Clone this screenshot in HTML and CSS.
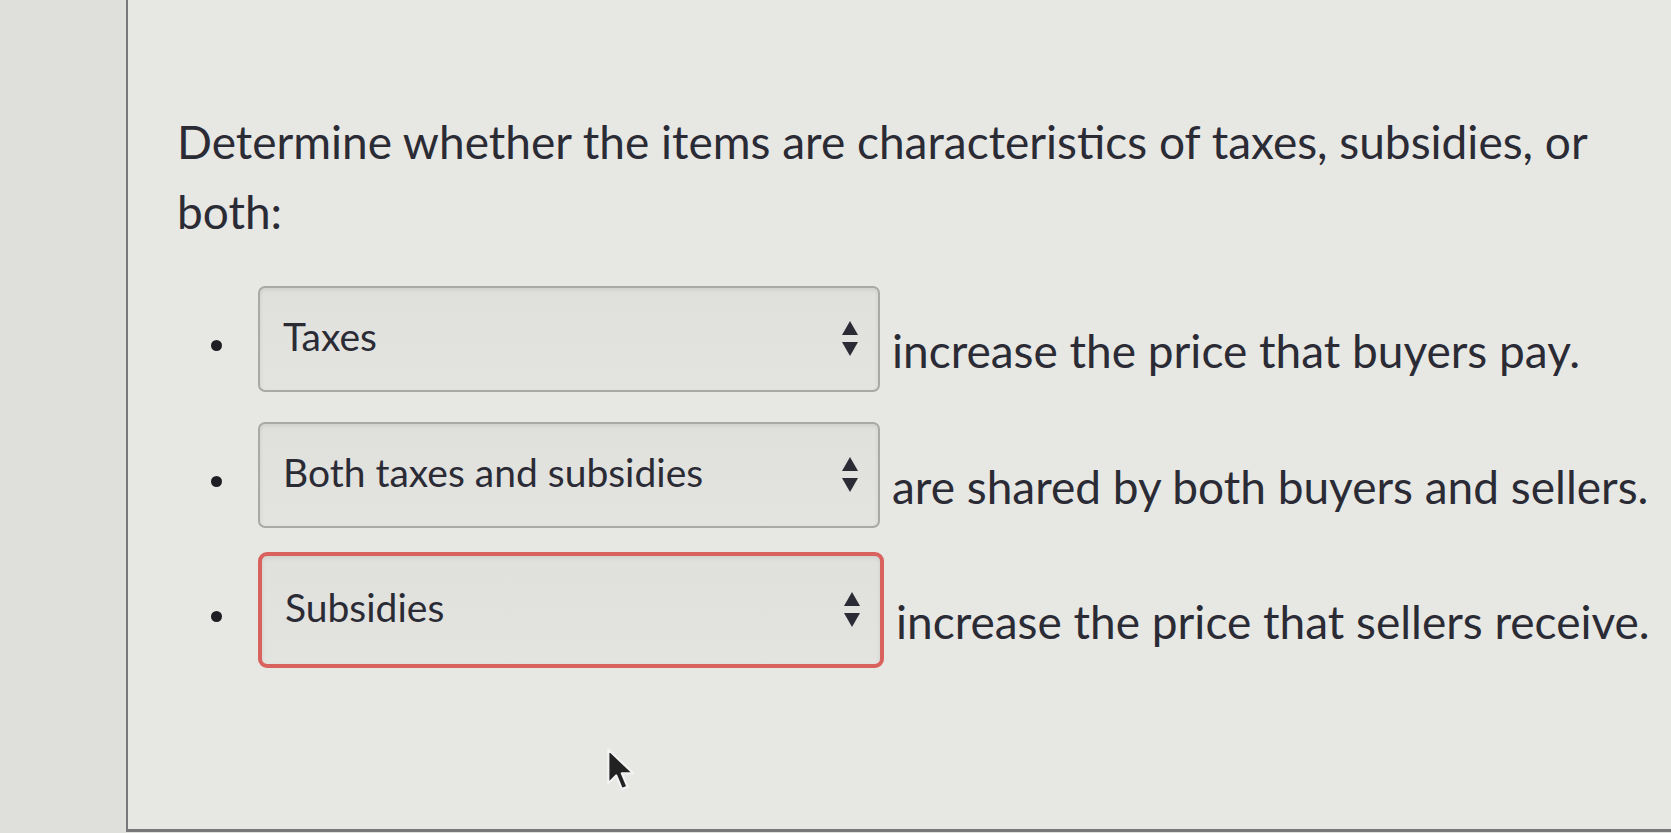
FILE: index.html
```html
<!DOCTYPE html>
<html>
    <head>
        <meta charset="utf-8">
        <title>Taxes and Subsidies</title>
        <link rel="stylesheet" href="styles.css">
    </head>
    <body>
        <div class="panel">
            <p class="question">Determine whether the items are characteristics of taxes, subsidies, or both:</p>
            <ul class="items">
                <li class="item">
                    <div class="dropdown">
                        <span class="choice">Taxes</span>
                        <svg class="arrows" width="18" height="36" viewBox="0 0 18 36">
                            <path d="M9 0 L17 14 L1 14 Z" fill="#2b2b35"/>
                            <path d="M1 21 L17 21 L9 35 Z" fill="#2b2b35"/>
                        </svg>
                    </div>
                    <span class="rest">increase the price that buyers pay.</span>
                </li>
                <li class="item">
                    <div class="dropdown">
                        <span class="choice">Both taxes and subsidies</span>
                        <svg class="arrows" width="18" height="36" viewBox="0 0 18 36">
                            <path d="M9 0 L17 14 L1 14 Z" fill="#2b2b35"/>
                            <path d="M1 21 L17 21 L9 35 Z" fill="#2b2b35"/>
                        </svg>
                    </div>
                    <span class="rest">are shared by both buyers and sellers.</span>
                </li>
                <li class="item">
                    <div class="dropdown wrong">
                        <span class="choice">Subsidies</span>
                        <svg class="arrows" width="18" height="36" viewBox="0 0 18 36">
                            <path d="M9 0 L17 14 L1 14 Z" fill="#2b2b35"/>
                            <path d="M1 21 L17 21 L9 35 Z" fill="#2b2b35"/>
                        </svg>
                    </div>
                    <span class="rest">increase the price that sellers receive.</span>
                </li>
            </ul>
            <svg class="cursor" width="34" height="48" viewBox="0 0 30 42">
                <path d="M2 2 L2 32 L9 25 L14 37 L19 35 L14 23 L24 23 Z" fill="#222" stroke="#f2f2f2" stroke-width="2" stroke-linejoin="round"/>
            </svg>
        </div>
    </body>
</html>
```

FILE: styles.css
```css
html, body {
    margin: 0;
    padding: 0;
}
body {
    background: #dfdfdb;
    font-family: Lato, "Open Sans", sans-serif;
    color: #2b2b35;
    height: 833px;
    overflow: hidden;
}
.panel {
    position: relative;
    margin-left: 126px;
    height: 829px;
    background: #e7e7e3;
    border-left: 2px solid #77777a;
    border-bottom: 3px solid #77777a;
    padding-left: 49px;
    padding-right: 40px;
}
.question {
    margin: 0;
    padding-top: 107px;
    width: 1460px;
    font-size: 46px;
    line-height: 70px;
}
.items {
    list-style: none;
    margin: 39px 0 0 0;
    padding: 0;
}
.item {
    display: flex;
    align-items: center;
    margin-bottom: 30px;
    white-space: nowrap;
}
.item:nth-child(2) {
    margin-bottom: 24px;
}
.item::before {
    content: "";
    flex: none;
    width: 11px;
    height: 11px;
    border-radius: 50%;
    background: #1e1e24;
    margin: 12px 36px 0 34px;
}
.dropdown {
    flex: none;
    width: 622px;
    height: 106px;
    box-sizing: border-box;
    display: flex;
    align-items: center;
    justify-content: space-between;
    padding: 0 19px 6px 23px;
    border: 2px solid #a9a9a6;
    border-radius: 7px;
    background: linear-gradient(#e0e0dd, #e3e3e0);
    box-shadow: inset 0 2px 4px rgba(0, 0, 0, 0.08);
}
.dropdown.wrong {
    width: 626px;
    height: 116px;
    border: 4px solid #d9625f;
    border-radius: 9px;
}
.choice {
    font-size: 39px;
}
.arrows {
    margin-top: 6px;
}
.rest {
    font-size: 46px;
    margin-left: 12px;
    padding-top: 22px;
}
.cursor {
    position: absolute;
    left: 478px;
    top: 747px;
}
```
